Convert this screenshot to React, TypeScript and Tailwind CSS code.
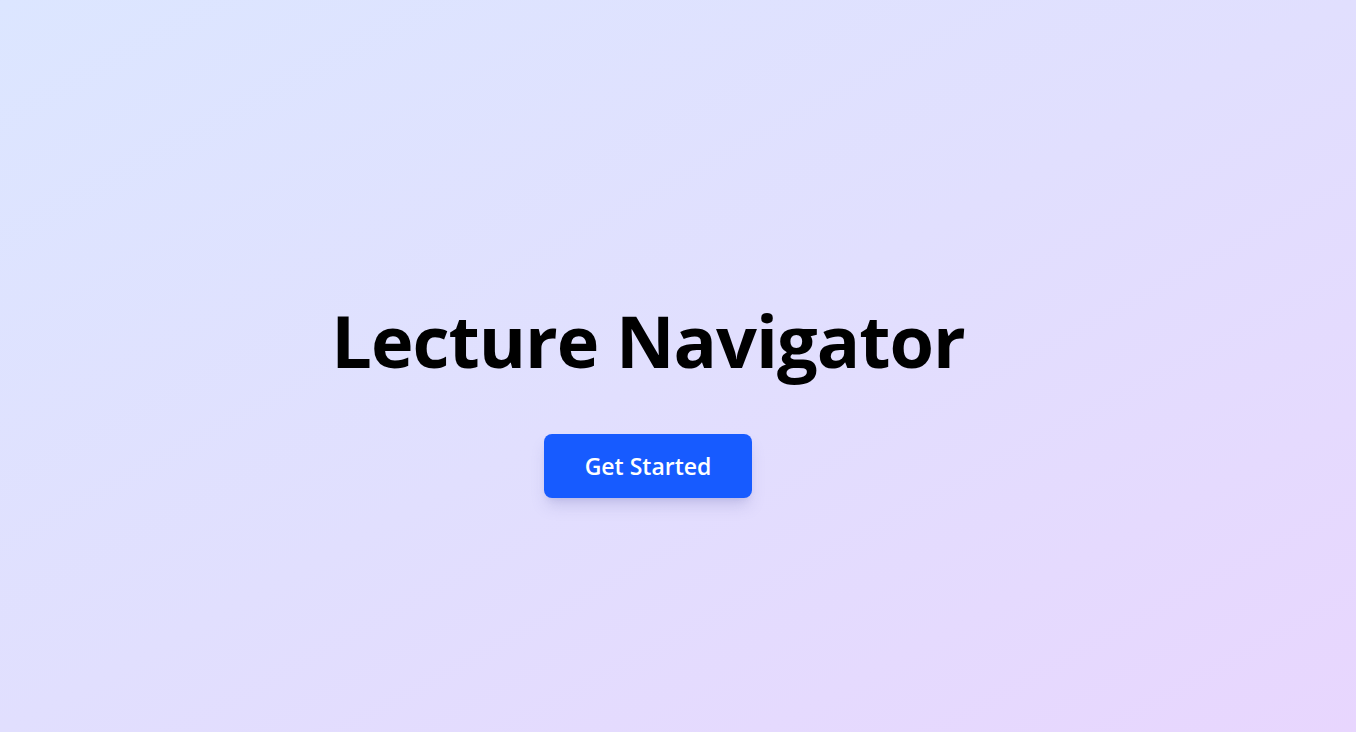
import React from "react";

export default function App() {
  return (
    <div
      className="min-h-screen w-full flex flex-col items-center justify-center bg-gradient-to-br from-[#dce6ff] via-[#e1dffe] to-[#e8d6fe] pr-[60px] pt-[70px]"
      style={{ fontFamily: '"Open Sans", "Noto Sans", sans-serif' }}
    >
      <h1 className="text-[72px] leading-[1] font-bold text-black tracking-[-1px]">
        Lecture Navigator
      </h1>
      <button className="mt-[58px] px-[41px] h-16 text-[23px] font-semibold text-white bg-[#175bff] rounded-lg shadow-lg shadow-[#8080c0]/30">
        Get Started
      </button>
    </div>
  );
}
